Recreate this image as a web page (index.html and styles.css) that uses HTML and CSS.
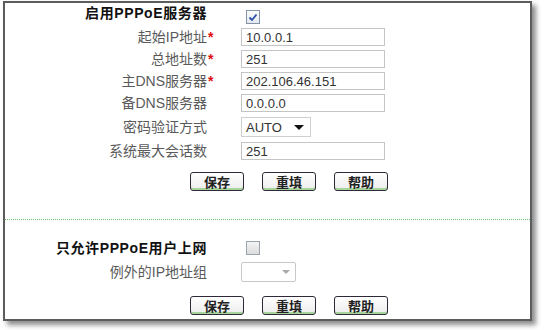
FILE: index.html
```html
<!DOCTYPE html>
<html lang="zh-CN">
<head>
    <meta charset="UTF-8">
    <title>PPPoE服务器</title>
    <link rel="stylesheet" href="styles.css">
</head>
<body>
    <div class="panel">
        <!-- PPPoE server settings -->
        <section class="group">
            <div class="form first">
                <div class="label title">启用PPPoE服务器</div>
                <div class="star"></div>
                <div class="field"><span class="check on"><svg width="10" height="9" viewBox="0 0 10 9"><path d="M1.5 4.5 L4 7 L8.5 1.5" fill="none" stroke="#2b4fa8" stroke-width="1.8"/></svg></span></div>

                <div class="label">起始IP地址</div>
                <div class="star">*</div>
                <div class="field"><input class="text" type="text" value="10.0.0.1"></div>

                <div class="label">总地址数</div>
                <div class="star">*</div>
                <div class="field"><input class="text" type="text" value="251"></div>

                <div class="label">主DNS服务器</div>
                <div class="star">*</div>
                <div class="field"><input class="text" type="text" value="202.106.46.151"></div>

                <div class="label">备DNS服务器</div>
                <div class="star"></div>
                <div class="field"><input class="text" type="text" value="0.0.0.0"></div>

                <div class="label">密码验证方式</div>
                <div class="star"></div>
                <div class="field"><div class="select auth">AUTO<span class="arrow"></span></div></div>

                <div class="label">系统最大会话数</div>
                <div class="star"></div>
                <div class="field"><input class="text" type="text" value="251"></div>
            </div>
            <div class="actions">
                <button class="btn">保存</button>
                <button class="btn">重填</button>
                <button class="btn">帮助</button>
            </div>
        </section>

        <!-- only PPPoE users online -->
        <section class="group second">
            <div class="form">
                <div class="label title">只允许PPPoE用户上网</div>
                <div class="star"></div>
                <div class="field"><span class="check"></span></div>

                <div class="label">例外的IP地址组</div>
                <div class="star"></div>
                <div class="field"><div class="select empty"><span class="arrow"></span></div></div>
            </div>
            <div class="actions">
                <button class="btn">保存</button>
                <button class="btn">重填</button>
                <button class="btn">帮助</button>
            </div>
        </section>
    </div>
</body>
</html>
```

FILE: styles.css
```css
* {
    margin: 0;
    padding: 0;
    box-sizing: border-box;
}

body {
    font-family: "Liberation Sans", "Noto Sans CJK SC", sans-serif;
    background: #fff;
    color: #555;
    width: 545px;
    height: 330px;
    overflow: hidden;
}

/* Outer frame */
.panel {
    margin: 1px 0 0 3px;
    width: 529px;
    border: 2px solid #5c5c5c;
    box-shadow: 4px 4px 5px rgba(0, 0, 0, 0.45);
    background: #fff;
}

.group {
    padding-bottom: 28px;
}

.group.second {
    border-top: 1px dotted #6cbf6c;
    padding-top: 16px;
    padding-bottom: 4px;
}

/* Form grid: label | star | field */
.form {
    display: grid;
    grid-template-columns: 202px 34px 1fr;
    grid-template-rows: 23px 22px 22px 22px 22px 26px 22px;
    align-items: center;
}

.group.second .form {
    grid-template-rows: 24px 24px;
}

.label {
    text-align: right;
    font-size: 14px;
    line-height: 18px;
    color: #5a5a5a;
    white-space: nowrap;
}

.label.title {
    font-weight: bold;
    color: #111;
    letter-spacing: 0.6px;
}

.form.first .label.title {
    align-self: start;
    line-height: 21px;
}

.star {
    color: #e01010;
    font-weight: bold;
    font-size: 14px;
    padding-left: 1px;
    line-height: 18px;
}

.field {
    display: flex;
    align-items: center;
}

.form.first .field:first-of-type {
    align-self: start;
}

.text {
    width: 144px;
    height: 18px;
    border: 1px solid #c4c4c4;
    padding: 0 4px;
    font-family: "Liberation Sans", sans-serif;
    font-size: 13px;
    color: #333;
    outline: none;
}

/* Checkboxes */
.check {
    width: 14px;
    height: 14px;
    border: 1px solid #9aa3ad;
    background: linear-gradient(#f4f4f4, #dcdcdc);
    display: flex;
    align-items: center;
    justify-content: center;
    margin-left: 5px;
}

.form.first .check {
    margin-top: 5px;
}

.check.on {
    border-color: #8393a8;
    background: linear-gradient(#fbfbfb, #e4e8ee);
}

/* Select boxes */
.select {
    height: 20px;
    border: 1px solid #cfcfcf;
    display: flex;
    align-items: center;
    justify-content: space-between;
    padding: 0 6px 0 4px;
    font-size: 13px;
    color: #333;
}

.select.auth {
    width: 70px;
}

.select.empty {
    width: 55px;
    border-color: #c8c8c8;
    border-radius: 2px;
    justify-content: flex-end;
    padding-right: 5px;
}

.arrow {
    width: 0;
    height: 0;
    border-left: 5px solid transparent;
    border-right: 5px solid transparent;
    border-top: 5px solid #111;
}

.select.empty .arrow {
    border-left-width: 4px;
    border-right-width: 4px;
    border-top: 4px solid #aaa;
}

/* Buttons */
.actions {
    display: flex;
    gap: 18px;
    padding-left: 185px;
    margin-top: 10px;
}

.group.second .actions {
    margin-top: 12px;
}

.btn {
    width: 54px;
    height: 19px;
    border: 1px solid #2e2838;
    border-radius: 3px;
    background: linear-gradient(#ffffff, #ececec);
    box-shadow: inset 0 -2px 0 #a6d49a;
    font-family: "Noto Sans CJK SC", sans-serif;
    font-size: 13px;
    font-weight: bold;
    color: #222;
    line-height: 16px;
}
```
